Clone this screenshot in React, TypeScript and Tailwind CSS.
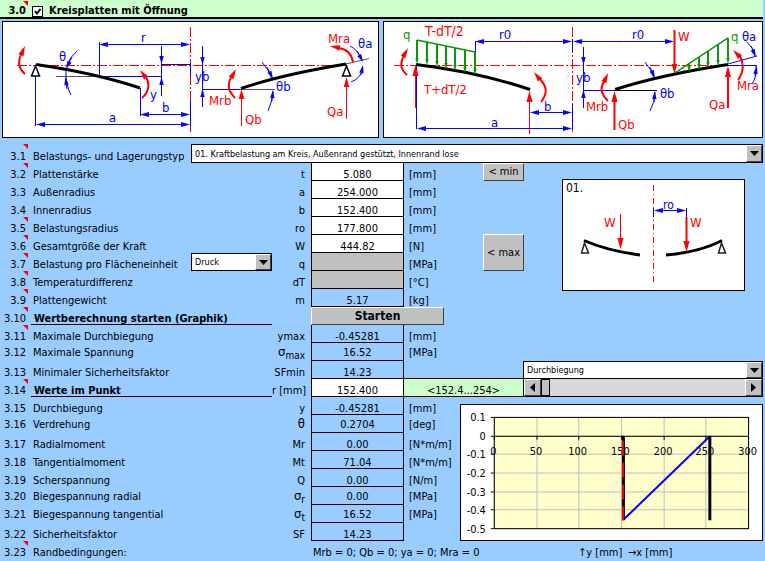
import { useState } from 'react';
import type { ReactNode } from 'react';

type RowData = {
    no: string;
    label: string;
    symbol: ReactNode;
    value: string;
    unit?: string;
    kind: 'input' | 'disabled' | 'result';
    note?: boolean;
    raised?: boolean;
};

const inputRows: RowData[] = [
    { no: '3.2', label: 'Plattenstärke', symbol: 't', value: '5.080', unit: '[mm]', kind: 'input', note: true },
    { no: '3.3', label: 'Außenradius', symbol: 'a', value: '254.000', unit: '[mm]', kind: 'input' },
    { no: '3.4', label: 'Innenradius', symbol: 'b', value: '152.400', unit: '[mm]', kind: 'input' },
    { no: '3.5', label: 'Belastungsradius', symbol: 'ro', value: '177.800', unit: '[mm]', kind: 'input', note: true },
    { no: '3.6', label: 'Gesamtgröße der Kraft', symbol: 'W', value: '444.82', unit: '[N]', kind: 'input', note: true },
    { no: '3.7', label: 'Belastung pro Flächeneinheit', symbol: 'q', value: '', unit: '[MPa]', kind: 'disabled', note: true },
    { no: '3.8', label: 'Temperaturdifferenz', symbol: 'dT', value: '', unit: '[°C]', kind: 'disabled', note: true },
    { no: '3.9', label: 'Plattengewicht', symbol: 'm', value: '5.17', unit: '[kg]', kind: 'result', note: true },
];

const maxRows: RowData[] = [
    { no: '3.11', label: 'Maximale Durchbiegung', symbol: 'ymax', value: '-0.45281', unit: '[mm]', kind: 'result', note: true },
    { no: '3.12', label: 'Maximale Spannung', symbol: <Sigma index="max" />, value: '16.52', unit: '[MPa]', kind: 'result', raised: true },
];

const pointRows: RowData[] = [
    { no: '3.15', label: 'Durchbiegung', symbol: 'y', value: '-0.45281', unit: '[mm]', kind: 'result' },
    { no: '3.16', label: 'Verdrehung', symbol: <span className="text-[13px] leading-none">θ</span>, value: '0.2704', unit: '[deg]', kind: 'result', raised: true },
    { no: '3.17', label: 'Radialmoment', symbol: 'Mr', value: '0.00', unit: '[N*m/m]', kind: 'result' },
    { no: '3.18', label: 'Tangentialmoment', symbol: 'Mt', value: '71.04', unit: '[N*m/m]', kind: 'result' },
    { no: '3.19', label: 'Scherspannung', symbol: 'Q', value: '0.00', unit: '[N/m]', kind: 'result' },
    { no: '3.20', label: 'Biegespannung radial', symbol: <Sigma index="r" />, value: '0.00', unit: '[MPa]', kind: 'result', raised: true },
    { no: '3.21', label: 'Biegespannung tangential', symbol: <Sigma index="t" />, value: '16.52', unit: '[MPa]', kind: 'result', raised: true },
    { no: '3.22', label: 'Sicherheitsfaktor', symbol: 'SF', value: '14.23', kind: 'result' },
];

function Sigma({ index }: { index: string }) {
    return (
        <>
            <span className="text-[13px] leading-none">σ</span>
            <sub className="text-[10px]">{index}</sub>
        </>
    );
}

function NoteMark() {
    return <span className="absolute top-0 right-[3px] h-[5px] w-[5px] bg-[#ff0000] [clip-path:polygon(0_0,100%_0,100%_100%)]" />;
}

function NoCell({ no, note, raised }: { no: string; note?: boolean; raised?: boolean }) {
    return (
        <td className={`relative h-[18px] pr-[5px] text-right align-bottom ${raised ? 'pb-[2px]' : ''}`}>
            {no}
            {note && <NoteMark />}
        </td>
    );
}

const bevel = 'border border-t-white border-l-white border-r-[#404040] border-b-[#404040] bg-[#c0c0c0]';

function Dropdown({ id, label, options }: { id: string; label: string; options: string[] }) {
    return (
        <div className="relative h-full w-full">
            <select
                id={id}
                aria-label={label}
                className="block h-full w-full appearance-none border border-black bg-white pr-5 pl-[3px] text-[9px] leading-[14px] outline-none"
            >
                {options.map((o) => (
                    <option key={o}>{o}</option>
                ))}
            </select>
            <span className={`pointer-events-none absolute inset-y-px right-px flex w-4 items-center justify-center ${bevel}`}>
                <svg viewBox="0 0 9 5" className="h-[5px] w-[9px]">
                    <path d="M0 0H9L4.500 5Z" />
                </svg>
            </span>
        </div>
    );
}

function ValueCell({ row }: { row: RowData }) {
    const id = `v-${row.no}`;
    return (
        <td className="h-[18px] border-x border-b border-black align-bottom">
            {row.kind === 'result' ? (
                <output id={id} className={`block text-center leading-[10px] ${row.raised ? 'pb-[2px]' : ''}`}>
                    {row.value}
                </output>
            ) : (
                <input
                    id={id}
                    defaultValue={row.value}
                    disabled={row.kind === 'disabled'}
                    className="block h-[17px] w-full bg-white pt-[5px] text-center leading-[12px] outline-none disabled:bg-[#c0c0c0]"
                />
            )}
        </td>
    );
}

function Row({ row, side }: { row: RowData; side?: ReactNode }) {
    const pad = row.raised ? 'pb-[2px]' : '';
    return (
        <tr>
            <NoCell no={row.no} note={row.note} raised={row.raised} />
            <td className={`pl-[2px] align-bottom ${pad}`}>
                <label htmlFor={`v-${row.no}`}>{row.label}</label>
            </td>
            <td className="h-[18px] p-0">
                {row.no === '3.7' && (
                    <div className="h-[18px]">
                        <Dropdown id="direction" label="Richtung der Belastung" options={['Druck', 'Zug']} />
                    </div>
                )}
            </td>
            <td className={`pr-[6px] text-right align-bottom ${pad}`}>{row.symbol}</td>
            <ValueCell row={row} />
            <td className={`pl-[5px] align-bottom ${pad}`}>{row.unit}</td>
            {side}
        </tr>
    );
}

// Straight arrow, head at (x2, y2)
function Arrow({ x1, y1, x2, y2, w = 1, size = 8 }: { x1: number; y1: number; x2: number; y2: number; w?: number; size?: number }) {
    const len = Math.hypot(x2 - x1, y2 - y1) || 1;
    const ux = (x2 - x1) / len;
    const uy = (y2 - y1) / len;
    const bx = x2 - ux * size;
    const by = y2 - uy * size;
    const half = size / 3.6;
    return (
        <g>
            <line x1={x1} y1={y1} x2={bx} y2={by} stroke="currentColor" strokeWidth={w} />
            <path d={`M${x2} ${y2}L${bx - uy * half} ${by + ux * half}L${bx + uy * half} ${by - ux * half}Z`} fill="currentColor" />
        </g>
    );
}

function Dim({ x1, x2, y }: { x1: number; x2: number; y: number }) {
    const mid = (x1 + x2) / 2;
    return (
        <g>
            <Arrow x1={mid} y1={y} x2={x1} y2={y} size={9} />
            <Arrow x1={mid} y1={y} x2={x2} y2={y} size={9} />
        </g>
    );
}

const diagramText = 'text-[13px] [&_text]:fill-current [&_text]:stroke-none';

function PlateDiagram() {
    return (
        <svg viewBox="3 22 375 115" className={`block h-auto w-full ${diagramText}`} fill="none" role="img" aria-label="Kreisplatte, Geometrie">
            <g stroke="#ff0000" strokeDasharray="10 2 2 2">
                <path d="M17 65.500H347" />
                <path d="M190.500 27V132" />
            </g>
            <path d="M56 76.500H98M202 89.500H275M346 64L369 58.500" stroke="#555" />
            <g className="text-[#0000ff]" stroke="currentColor">
                <path d="M35.500 76V126M99.500 42V76M98 76.500H162M161.500 64.500H190M161.500 46V96M140.500 88V116M190.500 62V77M190.500 100V126M202 89.500H242M202.500 46V107" />
                <path d="M77 51Q70 57 67 65M66 70Q65 83 71 95M262 62Q269 70 272 79M273 91Q272 103 268 111M350 46Q358 50 362 60M351 82Q362 78 362.500 67" />
                <g stroke="none">
                    <Dim x1={36} x2={190} y={124.5} />
                    <Dim x1={140} x2={190} y={114.5} />
                    <Dim x1={99} x2={190} y={44.5} />
                    <Arrow x1={161.5} y1={50} x2={161.5} y2={64} />
                    <Arrow x1={161.5} y1={92} x2={161.5} y2={77} />
                    <Arrow x1={202.5} y1={50} x2={202.5} y2={65} />
                    <Arrow x1={202.5} y1={104} x2={202.5} y2={89} />
                    <Arrow x1={72} y1={57} x2={66} y2={69} />
                    <Arrow x1={67} y1={89} x2={65.500} y2={77} />
                    <Arrow x1={267} y1={67} x2={273} y2={79} />
                    <Arrow x1={272} y1={101} x2={273} y2={90} />
                    <Arrow x1={357} y1={51} x2={363} y2={62} />
                    <Arrow x1={361} y1={75} x2={363} y2={65} />
                    <text x="141" y="42">r</text>
                    <text x="59" y="61">θ</text>
                    <text x="150" y="99">y</text>
                    <text x="162" y="112">b</text>
                    <text x="109" y="122">a</text>
                    <text x="195" y="81">yb</text>
                    <text x="276" y="91">θb</text>
                    <text x="358" y="48">θa</text>
                </g>
            </g>
            <g className="text-[#ff0000]" stroke="currentColor" strokeWidth="2">
                <path d="M25 74C18 68 18 62 21 54M142 98C149 92 150 84 146 77M235 98C227 90 227 83 232 76M353 62Q351 50 339 48" />
                <g stroke="none">
                    <Arrow x1={21} y1={55} x2={25} y2={46} size={10} />
                    <Arrow x1={147} y1={79} x2={140} y2={70} size={10} />
                    <Arrow x1={231} y1={78} x2={236} y2={69} size={10} />
                    <Arrow x1={340} y1={48} x2={330} y2={46} size={10} />
                    <Arrow x1={241.5} y1={126} x2={241.5} y2={89} size={10} />
                    <Arrow x1={346.5} y1={119} x2={346.5} y2={77} size={10} />
                    <text x="209" y="105">Mrb</text>
                    <text x="245" y="124">Qb</text>
                    <text x="328" y="43">Mra</text>
                    <text x="327" y="116">Qa</text>
                </g>
            </g>
            <g stroke="#000">
                <path d="M36 64.500Q95 73 140 88M241 88.500Q280 75 346 64" strokeWidth="3" />
                <path d="M35.500 66L31.500 76H39.500ZM346.500 66L342.500 76H350.500Z" strokeWidth="1.500" fill="#fff" />
            </g>
        </svg>
    );
}

function LoadDiagram() {
    const left = [[417, 40, 64], [427, 42, 65], [437, 44, 67], [446, 46, 69], [455, 48, 71], [465, 50, 73], [475, 52, 75]];
    const right = [[689, 64, 72], [699, 57, 70], [708, 51, 68], [718, 45, 66], [728, 38, 64]];
    return (
        <svg viewBox="384 22 378 115" className={`block h-auto w-full ${diagramText}`} fill="none" role="img" aria-label="Kreisplatte, Belastung">
            <g stroke="#ff0000" strokeDasharray="10 2 2 2">
                <path d="M394 65.500H757" />
                <path d="M572.500 27V132" />
            </g>
            <path d="M615 90.500H657" stroke="#000" />
            <g className="text-[#0000ff]" stroke="currentColor">
                <path d="M416.500 66V129M475.500 41V54M529.500 92V114M572.500 39V52M572.500 104V130M583.500 47V108M583 90.500H615M728 64L757 56M728 65.500H757" />
                <path d="M645 62Q651 69 654 78M655 92Q655 102 650 111M747 42Q754 48 755 56M756 66Q757 77 752 84" />
                <g stroke="none">
                    <Dim x1={417} x2={572} y={128.5} />
                    <Dim x1={530} x2={572} y={112.5} />
                    <Dim x1={475} x2={572} y={41.5} />
                    <Dim x1={573} x2={674} y={41.5} />
                    <Arrow x1={583.5} y1={52} x2={583.5} y2={65} />
                    <Arrow x1={583.5} y1={104} x2={583.5} y2={90} />
                    <Arrow x1={650} y1={67} x2={655} y2={78} />
                    <Arrow x1={654} y1={102} x2={655} y2={91} />
                    <Arrow x1={751} y1={46} x2={756} y2={57} />
                    <Arrow x1={755} y1={76} x2={757} y2={66} />
                    <text x="499" y="39">r0</text>
                    <text x="632" y="39">r0</text>
                    <text x="544" y="111">b</text>
                    <text x="491" y="127">a</text>
                    <text x="576" y="82">yb</text>
                    <text x="660" y="98">θb</text>
                    <text x="742" y="41">θa</text>
                </g>
            </g>
            <g className="text-[#ff0000]" stroke="currentColor" strokeWidth="2">
                <path d="M407 75C400 69 400 63 404 55M541 102C548 93 547 87 540 79M608 101C600 93 600 87 605 80M738 80C744 72 744 64 740 56" />
                <g stroke="none">
                    <Arrow x1={403} y1={57} x2={408} y2={48} size={10} />
                    <Arrow x1={541} y1={81} x2={534} y2={72} size={10} />
                    <Arrow x1={604} y1={82} x2={608} y2={73} size={10} />
                    <Arrow x1={741} y1={58} x2={733} y2={50} size={10} />
                    <Arrow x1={415.5} y1={108} x2={415.5} y2={65} size={11} />
                    <Arrow x1={529.5} y1={134} x2={529.5} y2={91} size={11} />
                    <Arrow x1={614.5} y1={130} x2={614.5} y2={91} size={11} w={2} />
                    <Arrow x1={674.5} y1={30} x2={674.5} y2={74} size={10} w={2} />
                    <Arrow x1={728} y1={108} x2={728} y2={66} size={11} w={2} />
                    <text x="425" y="36" className="text-[14px]">T-dT/2</text>
                    <text x="424" y="94">T+dT/2</text>
                    <text x="678" y="41">W</text>
                    <text x="586" y="111">Mrb</text>
                    <text x="618" y="129">Qb</text>
                    <text x="709" y="109">Qa</text>
                    <text x="737" y="90">Mra</text>
                </g>
            </g>
            <path d="M416 64.500Q478 72 530 89.500M615 89.500Q660 75 728 64.500" stroke="#000" strokeWidth="3" />
            <g className="text-[#089808]">
                <path d="M417 40L475 52M675 73L728 38" stroke="currentColor" strokeWidth="1.500" />
                {[...left, ...right].map(([x, y1, y2]) => (
                    <Arrow key={x} x1={x} y1={y1} x2={x} y2={y2} size={6} w={2} />
                ))}
                <text x="403" y="39">q</text>
                <text x="731" y="41">q</text>
            </g>
        </svg>
    );
}

function CaseDiagram() {
    return (
        <svg viewBox="563 180 181 110" className={`block h-auto w-full ${diagramText}`} fill="none" role="img" aria-label="Belastungstyp 01">
            <path d="M653.500 185V285" stroke="#ff0000" strokeDasharray="6 3 1 3" />
            <g className="text-[#0000ff]">
                <path d="M653.500 208V217M686.500 208V217" stroke="currentColor" />
                <Dim x1={654} x2={686} y={210.5} />
                <text x="663" y="209" className="text-[12px]">ro</text>
            </g>
            <path d="M584 240.500Q608 251 640 255M666 255Q700 252 722 240.500" stroke="#000" strokeWidth="3" />
            <path d="M584.500 243L581.500 253H588.500ZM721.500 243L718.500 253H725.500Z" stroke="#222" strokeWidth="1.500" fill="#fff" />
            <g className="text-[#ff0000]">
                <Arrow x1={620.5} y1={214} x2={620.5} y2={249} size={11} />
                <Arrow x1={686.5} y1={217} x2={686.5} y2={252} size={11} w={2} />
                <text x="604" y="227">W</text>
                <text x="690" y="227">W</text>
            </g>
            <text x="566" y="192" className="text-[12px]">01.</text>
        </svg>
    );
}

const yTicks = ['0.1', '0', '-0.1', '-0.2', '-0.3', '-0.4', '-0.5'];
const xTicks = ['0', '50', '100', '150', '200', '250', '300'];
const gridY = [416.5, 435.5, 453.5, 472.5, 491.5, 509.5, 528.5];
const gridX = [493.5, 536.5, 578.5, 621.5, 664.5, 706.5, 749.5];

function Chart() {
    return (
        <svg viewBox="460 404 303 136" className="block h-auto w-full text-[11px]" role="img" aria-label="Durchbiegung über Radius">
            <rect x="493.500" y="416.500" width="256" height="112" fill="#ffffcc" />
            <g stroke="#c0c0c0">
                {gridY.map((y) => (
                    <path key={y} d={`M493 ${y}H749`} />
                ))}
                {gridX.map((x) => (
                    <path key={x} d={`M${x} 416V528`} />
                ))}
            </g>
            <rect x="493.500" y="416.500" width="256" height="112" fill="none" stroke="#000" />
            <path d="M493 435.500H749" stroke="#000" />
            {gridY.map((y, i) => (
                <g key={y}>
                    <path d={`M490 ${y}H493`} stroke="#000" />
                    <text x="485" y={y + 4} textAnchor="end">{yTicks[i]}</text>
                </g>
            ))}
            {gridX.map((x, i) => (
                <g key={x}>
                    <path d={`M${x} 435V439`} stroke="#000" />
                    <text x={x - 1} y="454" textAnchor="middle">{xTicks[i]}</text>
                </g>
            ))}
            <path d="M624 519L710 436" stroke="#0000ff" strokeWidth="2" />
            <path d="M623.500 435V520M710.500 435V520" stroke="#000" strokeWidth="3" />
            <path d="M623 440V520" stroke="#ff0000" strokeWidth="2" strokeDasharray="15 7" />
        </svg>
    );
}

export default function App() {
    const [radius, setRadius] = useState(152.4);

    return (
        <main className="min-h-screen bg-[#99ccff] pr-[2px] font-['DejaVu_Sans_Condensed','Noto_Sans',sans-serif] text-[11px] leading-[12px] text-black">
            <header className="relative flex h-[19px] items-center border-b-2 border-black bg-[#ccffcc] pt-[5px] font-bold">
                <span className="relative w-[31px] pr-[5px] text-right">3.0</span>
                <span className="absolute top-px left-0 h-[5px] w-[31px]">
                    <NoteMark />
                </span>
                <span className="relative ml-px h-[11px] w-[11px]">
                    <input id="enabled" type="checkbox" defaultChecked className="peer block h-full w-full appearance-none border border-black bg-white" />
                    <svg viewBox="0 0 11 11" className="pointer-events-none absolute inset-0 hidden peer-checked:block" fill="none" stroke="#000" strokeWidth="2">
                        <path d="M3 5L5 7.500L8.500 3" />
                    </svg>
                </span>
                <label htmlFor="enabled" className="pl-[6px]">Kreisplatten mit Öffnung</label>
            </header>

            <section className="flex gap-1 pt-[2px] pb-[6px] pl-[2px]">
                <div className="min-w-0 flex-[377] border border-black bg-white">
                    <PlateDiagram />
                </div>
                <div className="min-w-0 flex-[380] border border-black bg-white">
                    <LoadDiagram />
                </div>
            </section>

            <table className="w-full table-fixed border-separate border-spacing-0 whitespace-nowrap">
                <colgroup>
                    <col className="w-[31px]" />
                    <col className="w-[160px]" />
                    <col className="w-[81px]" />
                    <col className="w-[39px]" />
                    <col className="w-[93px]" />
                    <col className="w-[56px]" />
                    <col className="w-[63px]" />
                    <col />
                </colgroup>
                <tbody>
                    <tr>
                        <NoCell no="3.1" note />
                        <td className="pl-[2px] align-bottom">
                            <label htmlFor="loadcase">Belastungs- und Lagerungstyp</label>
                        </td>
                        <td colSpan={6} className="p-0">
                            <div className="h-[19px]">
                                <Dropdown
                                    id="loadcase"
                                    label="Belastungs- und Lagerungstyp"
                                    options={['01. Kraftbelastung am Kreis, Außenrand gestützt, Innenrand lose']}
                                />
                            </div>
                        </td>
                    </tr>
                    {inputRows.map((row, i) => (
                        <Row
                            key={row.no}
                            row={row}
                            side={
                                i === 0 && (
                                    <td rowSpan={11} colSpan={2} className="p-0 align-top">
                                        <div className="flex items-start pr-[18px] pl-[23px]">
                                            <div className="flex w-[41px] shrink-0 flex-col gap-[53px]">
                                                <button className={`h-[18px] ${bevel}`}>&lt; min</button>
                                                <button className={`h-[37px] ${bevel}`}>&lt; max</button>
                                            </div>
                                            <div className="mt-4 ml-[38px] min-w-0 flex-1 border border-black bg-white">
                                                <CaseDiagram />
                                            </div>
                                        </div>
                                    </td>
                                )
                            }
                        />
                    ))}
                    <tr>
                        <NoCell no="3.10" note />
                        <td colSpan={2} className="border-b border-black pl-[3px] align-bottom leading-[10px] font-bold">Wertberechnung starten (Graphik)</td>
                        <td />
                        <td colSpan={2} className="p-0">
                            <button className={`block h-[18px] w-[133px] text-[12px] font-bold ${bevel}`}>Starten</button>
                        </td>
                    </tr>
                    {maxRows.map((row) => (
                        <Row key={row.no} row={row} />
                    ))}
                    <tr>
                        <NoCell no="3.13" />
                        <td className="pl-[2px] align-bottom">Minimaler Sicherheitsfaktor</td>
                        <td />
                        <td className="pr-[6px] text-right align-bottom">SFmin</td>
                        <td className="border-x border-b border-black text-center align-bottom leading-[10px]">14.23</td>
                        <td colSpan={2} className="border-b border-black" />
                        <td className="p-0">
                            <div className="h-[18px]">
                                <Dropdown id="quantity" label="Diagramm" options={['Durchbiegung', 'Verdrehung', 'Radialmoment', 'Tangentialmoment']} />
                            </div>
                        </td>
                    </tr>
                    <tr>
                        <NoCell no="3.14" note />
                        <td colSpan={2} className="border-b border-black pl-[3px] align-bottom leading-[10px] font-bold">
                            <label htmlFor="radius">Werte im Punkt</label>
                        </td>
                        <td className="pr-[6px] text-right align-bottom">r [mm]</td>
                        <td className="border-x border-b border-black p-0">
                            <input
                                id="radius"
                                value={radius.toFixed(3)}
                                onChange={(e) => setRadius(Number(e.target.value) || 152.4)}
                                className="block h-[17px] w-full bg-white pt-[5px] text-center leading-[12px] outline-none"
                            />
                        </td>
                        <td colSpan={2} className="border-b border-black bg-[#ccffcc] text-center align-bottom leading-[10px]">&lt;152.4...254&gt;</td>
                        <td className="p-0">
                            <div className="flex h-[18px] border-x border-b border-black">
                                <button aria-label="Kleiner" onClick={() => setRadius(Math.max(152.4, radius - 1))} className={`flex w-[17px] items-center justify-center ${bevel}`}>
                                    <svg viewBox="0 0 5 9" className="h-[9px] w-[5px]">
                                        <path d="M5 0V9L0 4.500Z" />
                                    </svg>
                                </button>
                                <input
                                    type="range"
                                    aria-label="Radius"
                                    min={152.4}
                                    max={254}
                                    step={0.1}
                                    value={radius}
                                    onChange={(e) => setRadius(Number(e.target.value))}
                                    className="h-[17px] min-w-0 flex-1 appearance-none bg-[#d8d8d8] outline-none [&::-webkit-slider-thumb]:h-[17px] [&::-webkit-slider-thumb]:w-[9px] [&::-webkit-slider-thumb]:appearance-none [&::-webkit-slider-thumb]:border [&::-webkit-slider-thumb]:border-black [&::-webkit-slider-thumb]:bg-[#c0c0c0]"
                                />
                                <button aria-label="Größer" onClick={() => setRadius(Math.min(254, radius + 1))} className={`flex w-[17px] items-center justify-center ${bevel}`}>
                                    <svg viewBox="0 0 5 9" className="h-[9px] w-[5px]">
                                        <path d="M0 0V9L5 4.500Z" />
                                    </svg>
                                </button>
                            </div>
                        </td>
                    </tr>
                    {pointRows.map((row, i) => (
                        <Row
                            key={row.no}
                            row={row}
                            side={
                                i === 0 && (
                                    <td rowSpan={8} colSpan={2} className="p-0 align-bottom">
                                        <div className="border border-black bg-white">
                                            <Chart />
                                        </div>
                                    </td>
                                )
                            }
                        />
                    ))}
                    <tr>
                        <NoCell no="3.23" note />
                        <td className="pl-[2px] align-bottom">Randbedingungen:</td>
                        <td />
                        <td />
                        <td colSpan={4} className="pl-[2px] align-bottom">
                            <div className="flex">
                                <span className="w-[265px]">Mrb = 0; Qb = 0; ya = 0; Mra = 0</span>
                                <span className="w-[50px]">↑y [mm]</span>
                                <span>→x [mm]</span>
                            </div>
                        </td>
                    </tr>
                </tbody>
            </table>
        </main>
    );
}
